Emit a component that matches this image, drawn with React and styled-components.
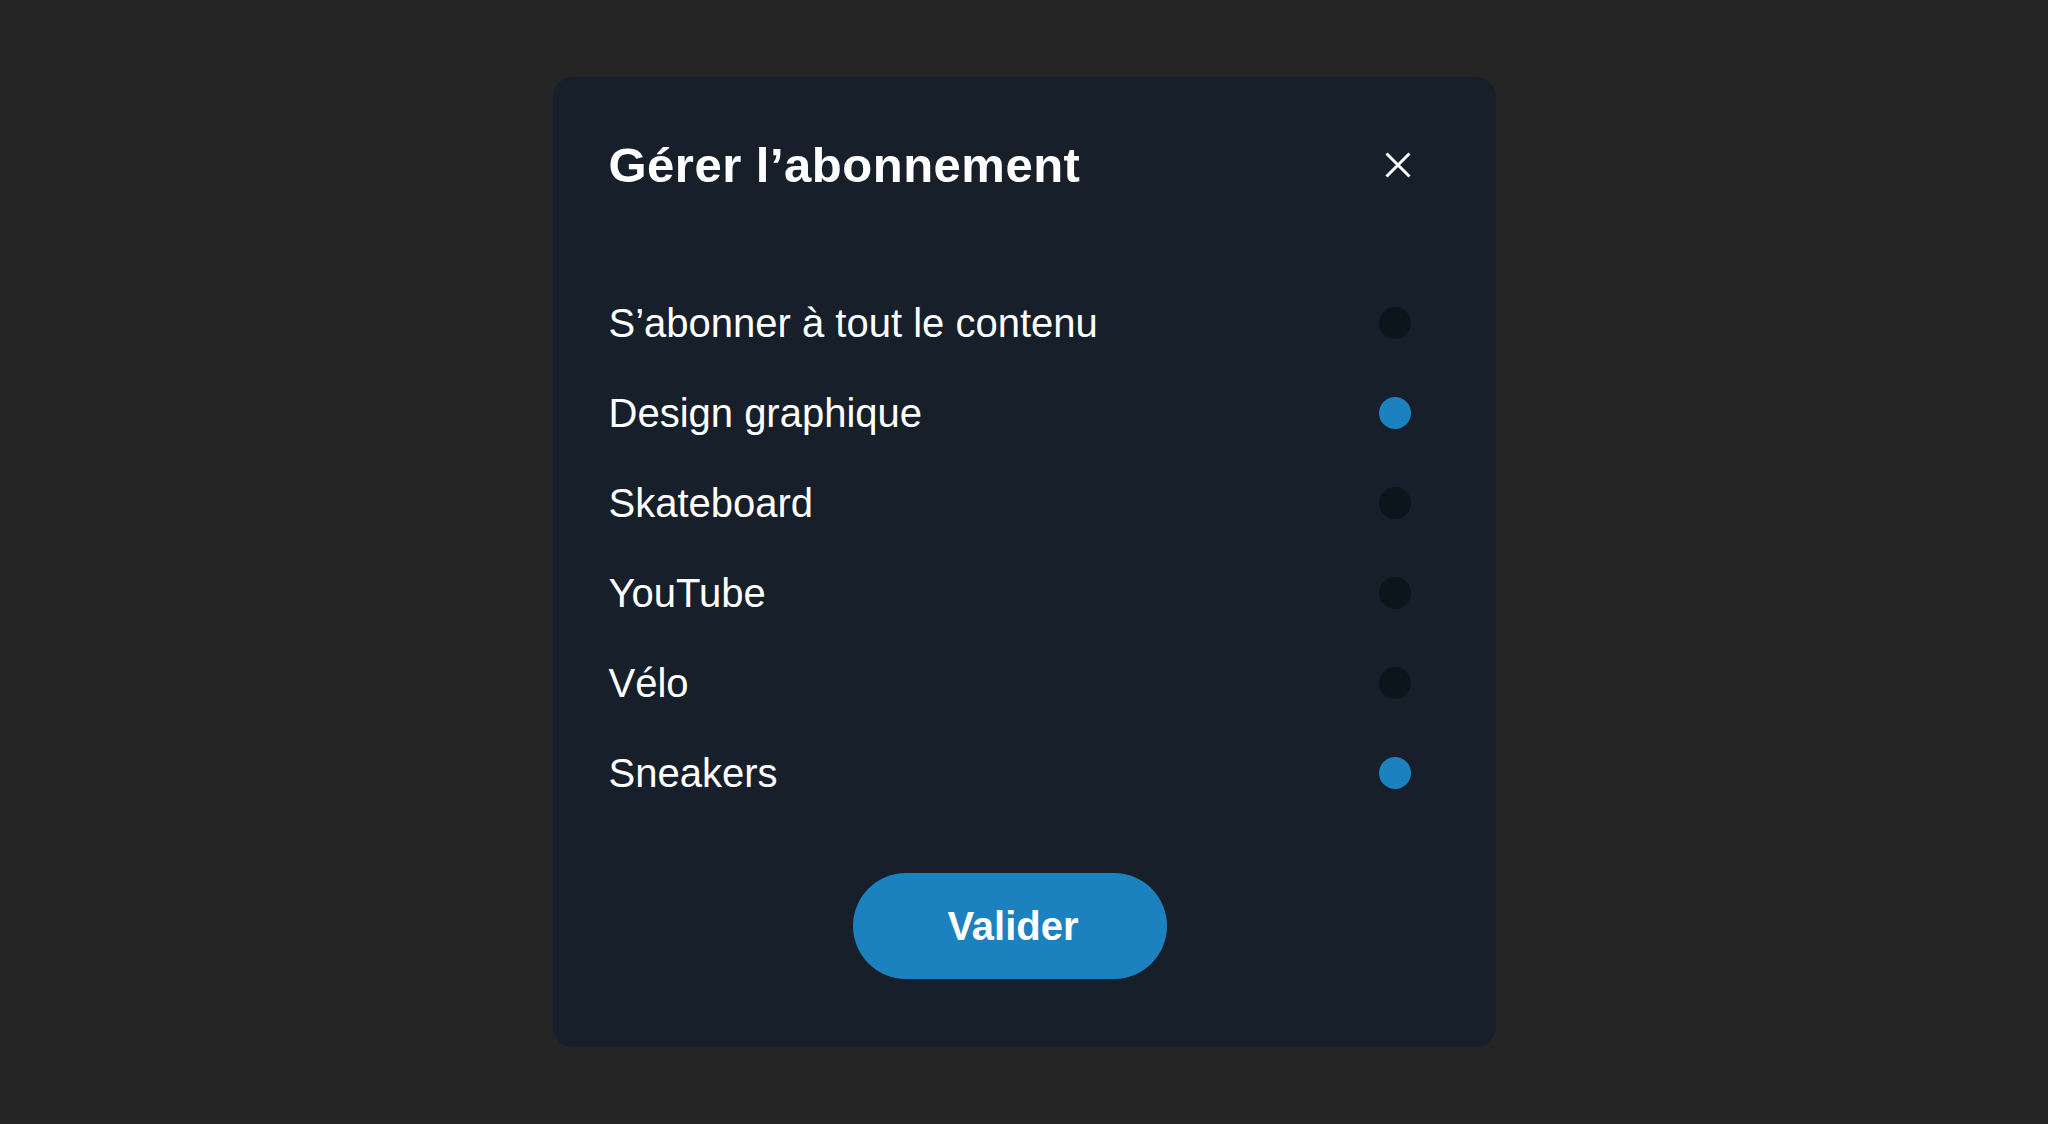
import { useState } from 'react';
import styled, { createGlobalStyle } from 'styled-components';

const GlobalStyle = createGlobalStyle`
  html, body {
    margin: 0;
    padding: 0;
    background-color: #252525;
  }
  body {
    font-family: 'Liberation Sans', Arial, Helvetica, sans-serif;
  }
`;

const Page = styled.main`
  min-height: 100vh;
  display: flex;
  align-items: center;
  justify-content: center;
`;

const Modal = styled.section`
  width: 943px;
  box-sizing: border-box;
  padding: 56px 85px 68px 56px;
  background-color: #17202a;
  border-radius: 20px;
  display: flex;
  flex-direction: column;
`;

const Header = styled.header`
  height: 64px;
  display: flex;
  align-items: center;
  justify-content: space-between;
`;

const Title = styled.h1`
  margin: 0;
  font-size: 49px;
  line-height: 1;
  font-weight: 700;
  letter-spacing: 0.5px;
  color: #ffffff;
`;

const CloseButton = styled.button`
  width: 26px;
  height: 26px;
  padding: 0;
  border: none;
  background: none;
  cursor: pointer;
  display: flex;
  svg {
    display: block;
  }
`;

const List = styled.ul`
  list-style: none;
  margin: 101px 0 0;
  padding: 0;
  display: flex;
  flex-direction: column;
  gap: 40px;
`;

const Row = styled.li`
  height: 50px;
  display: flex;
  align-items: center;
  justify-content: space-between;
  cursor: pointer;
`;

const Label = styled.span`
  font-size: 40px;
  line-height: 1;
  color: #ffffff;
`;

const Dot = styled.span`
  width: 32px;
  height: 32px;
  border-radius: 50%;
  background-color: ${(p) => (p.$on ? '#1c81bf' : '#0d151c')};
`;

const Footer = styled.div`
  margin-top: 75px;
  display: flex;
  justify-content: center;
`;

const Submit = styled.button`
  width: 314px;
  height: 106px;
  padding: 0 0 0 7px;
  border: none;
  border-radius: 53px;
  background-color: #1c81bf;
  color: #ffffff;
  font-family: inherit;
  font-size: 40px;
  font-weight: 700;
  cursor: pointer;
  &:hover {
    background-color: #1a76ae;
  }
`;

const topics = [
  { id: 'all', label: 'S’abonner à tout le contenu', on: false },
  { id: 'design', label: 'Design graphique', on: true },
  { id: 'skate', label: 'Skateboard', on: false },
  { id: 'youtube', label: 'YouTube', on: false },
  { id: 'velo', label: 'Vélo', on: false },
  { id: 'sneakers', label: 'Sneakers', on: true },
];

function App() {
  const [selected, setSelected] = useState(
    topics.reduce((acc, t) => ({ ...acc, [t.id]: t.on }), {})
  );
  const toggle = (id) => () => {
    setSelected({ ...selected, [id]: !selected[id] });
  };

  return (
    <Page>
      <GlobalStyle />
      <Modal>
        <Header>
          <Title>Gérer l’abonnement</Title>
          <CloseButton aria-label="Fermer">
            <svg width="26" height="26" viewBox="0 0 26 26">
              <path
                d="M1.5 1.5 24.5 24.5M24.5 1.5 1.5 24.5"
                stroke="#ffffff"
                strokeWidth="3"
                fill="none"
              />
            </svg>
          </CloseButton>
        </Header>
        <List>
          {topics.map((t) => (
            <Row key={t.id} onClick={toggle(t.id)}>
              <Label>{t.label}</Label>
              <Dot $on={selected[t.id]} />
            </Row>
          ))}
        </List>
        <Footer>
          <Submit>Valider</Submit>
        </Footer>
      </Modal>
    </Page>
  );
}

export default App;
